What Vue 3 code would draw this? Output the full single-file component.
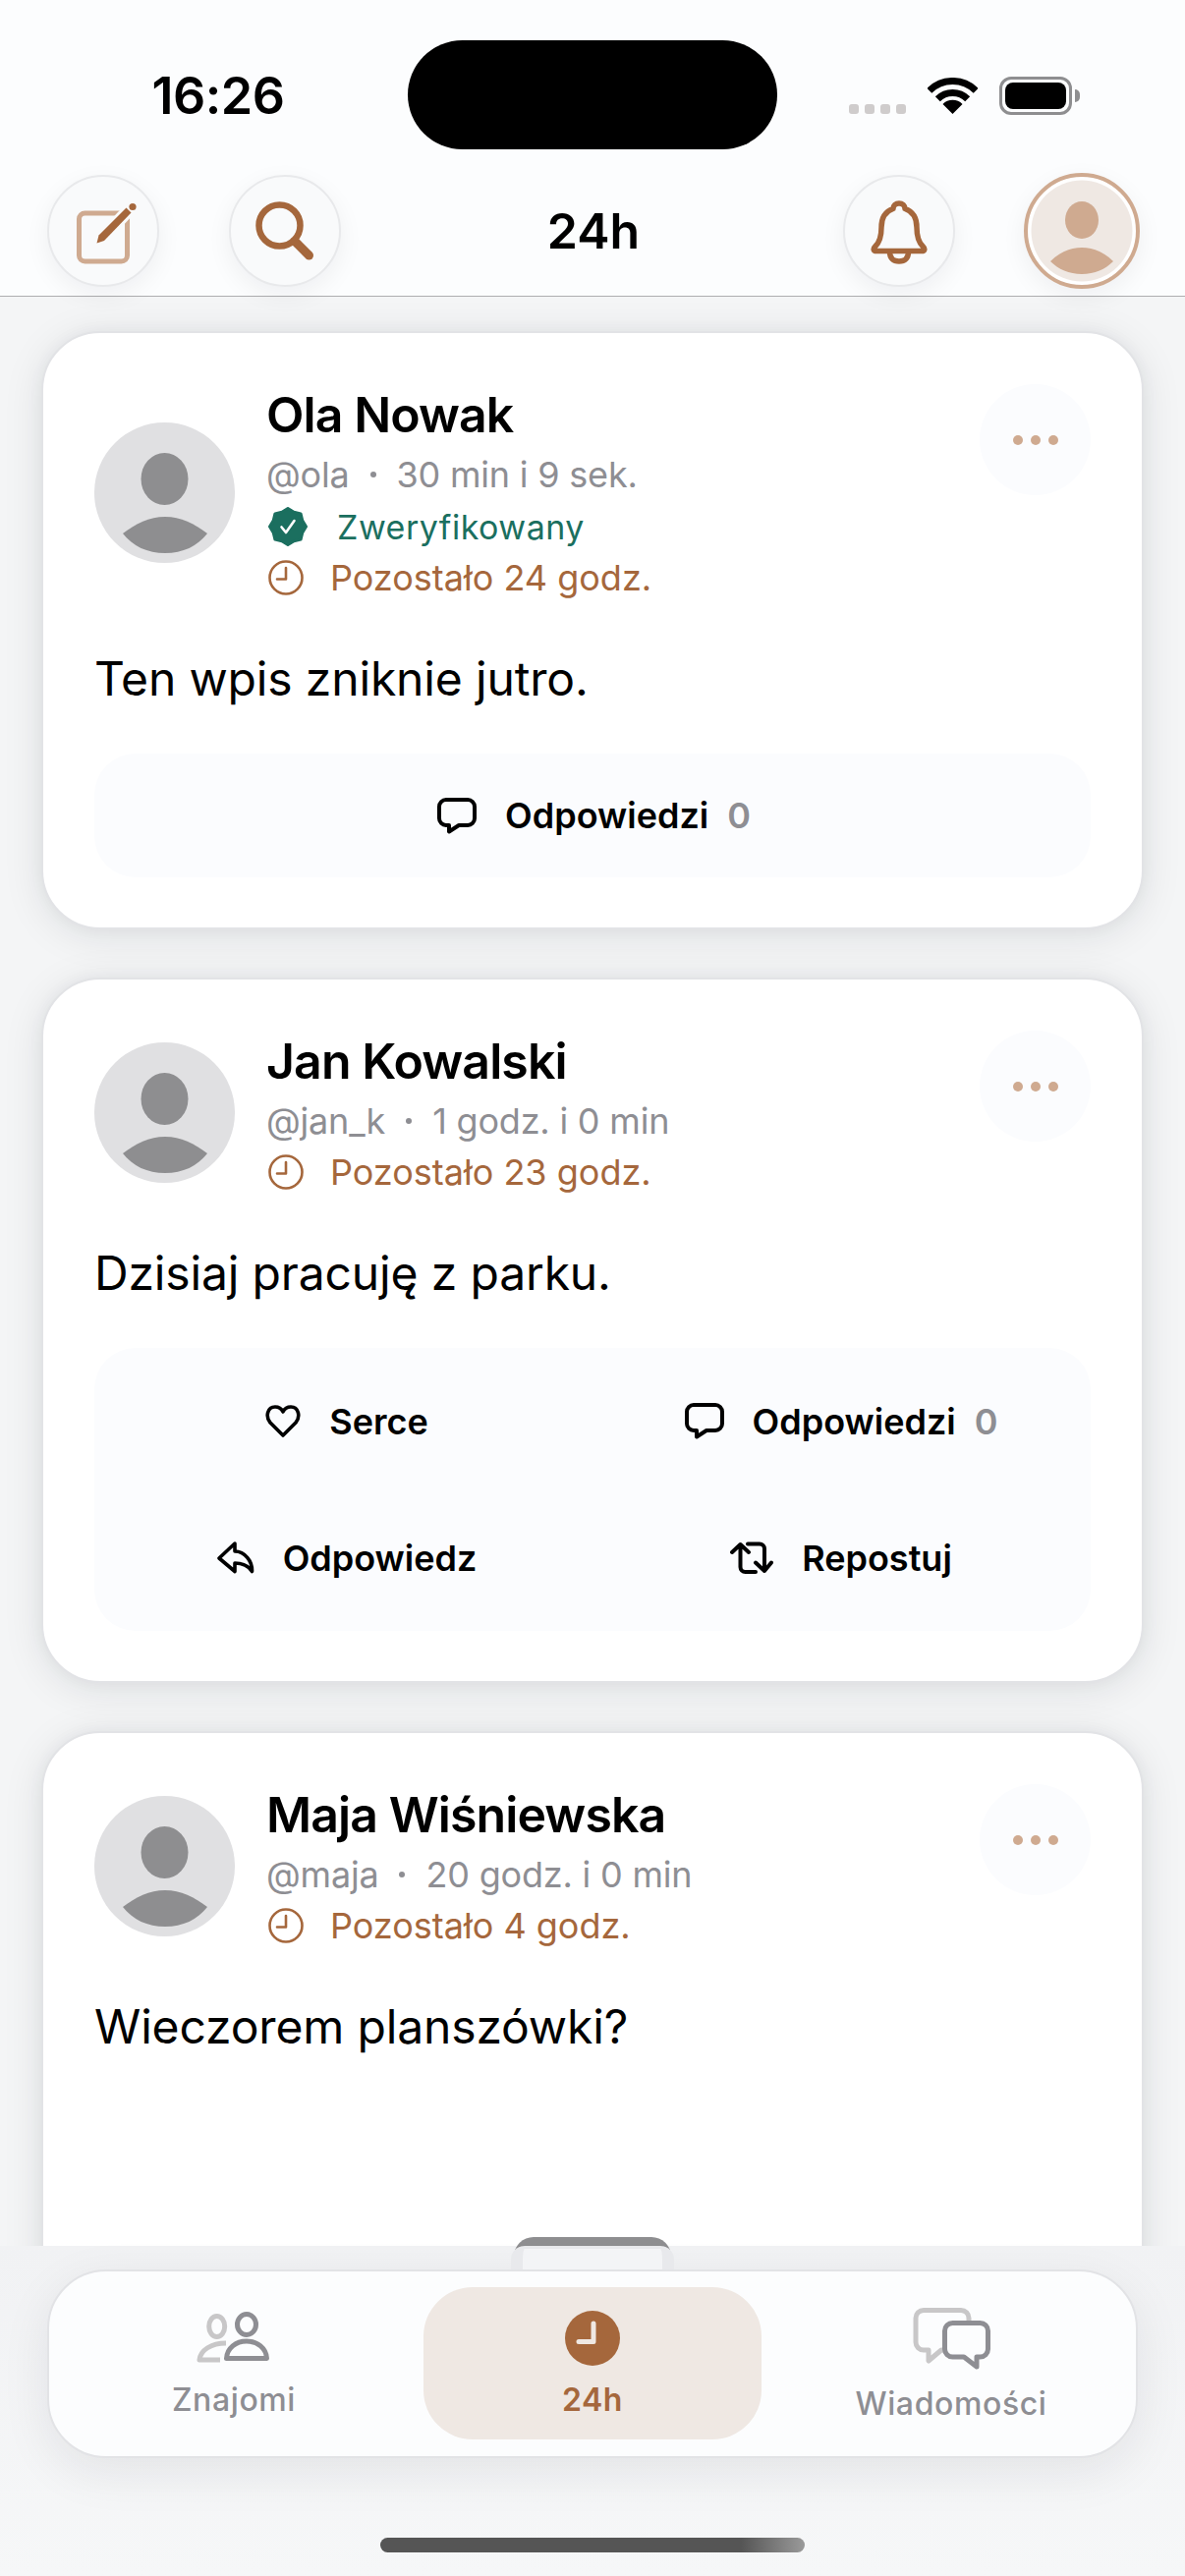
<script setup>
// 24h feed: posts that disappear after a day, with top bar and bottom tabs.
const posts = [
    {
        id: 1,
        name: "Ola Nowak",
        handle: "@ola",
        age: "30 min i 9 sek.",
        verified: true,
        remaining: "Pozostało 24 godz.",
        text: "Ten wpis zniknie jutro.",
        actions: "single",
    },
    {
        id: 2,
        name: "Jan Kowalski",
        handle: "@jan_k",
        age: "1 godz. i 0 min",
        verified: false,
        remaining: "Pozostało 23 godz.",
        text: "Dzisiaj pracuję z parku.",
        actions: "full",
    },
    {
        id: 3,
        name: "Maja Wiśniewska",
        handle: "@maja",
        age: "20 godz. i 0 min",
        verified: false,
        remaining: "Pozostało 4 godz.",
        text: "Wieczorem planszówki?",
        actions: "none",
    },
];

// Outline of the scalloped verified badge.
const badgePoints = Array.from({ length: 16 }, (_, i) => {
    const r = i % 2 ? 16 : 18.5;
    const a = (Math.PI * i) / 8 - Math.PI / 2;
    return `${(20 + r * Math.cos(a)).toFixed(2)},${(20 + r * Math.sin(a)).toFixed(2)}`;
}).join(" ");
</script>

<template>
    <div class="screen">
        <header class="top">
            <div class="status">
                <div class="status-left"><span class="time">16:26</span></div>
                <div class="island"></div>
                <div class="status-right">
                    <div class="signal"><i></i><i></i><i></i><i></i></div>
                    <svg class="wifi" width="51" height="37" viewBox="0 0 51 37" fill="none" stroke="#000" stroke-width="7">
                        <path d="M1.8 13.3a33.5 33.5 0 0 1 47.4 0" />
                        <path d="M10.3 21.8a21.5 21.5 0 0 1 30.4 0" />
                        <path d="M25.5 37 15.5 27a14 14 0 0 1 20 0Z" fill="#000" stroke="none" />
                    </svg>
                    <div class="battery"><div class="battery-fill"></div></div>
                </div>
            </div>
            <nav class="nav">
                <div class="nav-side">
                    <button class="round" type="button">
                        <svg width="80" height="80" viewBox="65 194.5 80 80" fill="none">
                            <rect x="80.5" y="216.5" width="49" height="49" rx="6" stroke="#cfaa90" stroke-width="5" />
                            <path d="M105 241 137 207" stroke="#f9fafb" stroke-width="13" />
                            <path d="M98.5 247 100.5 239 128.500 211 133.500 216 106 244.500Z" fill="#a5673c" />
                            <circle cx="135" cy="210" r="3.6" fill="#a5673c" />
                        </svg>
                    </button>
                    <button class="round" type="button">
                        <svg width="80" height="80" viewBox="251 194.5 80 80" fill="none" stroke="#a5673c">
                            <circle cx="285.5" cy="229" r="21" stroke-width="6.500" />
                            <path d="M301 245 315.500 259.500" stroke-width="9" stroke-linecap="round" />
                        </svg>
                    </button>
                </div>
                <h1 class="title">24h</h1>
                <div class="nav-side nav-side-right">
                    <button class="round" type="button">
                        <svg width="80" height="80" viewBox="875 194.5 80 80" fill="none" stroke="#a5673c" stroke-width="5.500" stroke-linejoin="round">
                            <path d="M915 206.5c-3.5 0-6 2.5-6 5.5-9 3-12 10-12 19 0 10-2 15-6 19-3 3-2 5 1 5h46c3 0 4-2 1-5-4-4-6-9-6-19 0-9-3-16-12-19 0-3-2.5-5.5-6-5.5Z" />
                            <path d="M905.5 256c0 6 3.500 9.500 9.500 9.500s9.500-3.500 9.500-9.500" />
                        </svg>
                    </button>
                    <div class="me">
                        <svg width="118" height="118" viewBox="0 0 118 118">
                            <circle cx="59" cy="59" r="57" fill="#fff" stroke="#cfaa90" stroke-width="4" />
                            <circle cx="59" cy="59" r="51.500" fill="#efe8e3" />
                            <ellipse cx="59" cy="48" rx="17" ry="19" fill="#cfaa90" />
                            <path d="M27 90C36 81 47 76 59 76 71 76 82 81 91 90 83 98 72 103 59 103 46 103 35 98 27 90Z" fill="#cfaa90" />
                        </svg>
                    </div>
                </div>
            </nav>
        </header>

        <main class="feed">
            <article
                v-for="post in posts"
                :key="post.id"
                class="card"
                :class="{ 'card-open': post.actions === 'none' }"
            >
                <div class="card-head">
                    <svg class="avatar" width="143" height="143" viewBox="0 0 143 143">
                        <circle cx="71.500" cy="71.500" r="71.500" fill="#e0e0e2" />
                        <ellipse cx="71.500" cy="57.500" rx="24" ry="26.500" fill="#8e8e90" />
                        <path d="M29 113C42 103 56 96 72 96 88 96 102 103 115 113 105 126 90 133 72 133 54 133 39 126 29 113Z" fill="#8e8e90" />
                    </svg>
                    <div class="who">
                        <div class="name">{{ post.name }}</div>
                        <div class="meta">
                            <span>{{ post.handle }}</span>
                            <i class="dot"></i>
                            <span>{{ post.age }}</span>
                        </div>
                        <div v-if="post.verified" class="line line-verified">
                            <svg width="40" height="40" viewBox="0 0 40 40">
                                <polygon :points="badgePoints" fill="#1b6f5f" stroke="#1b6f5f" stroke-width="3" stroke-linejoin="round" />
                                <path d="M13.500 20.500 18 26 26.500 14" fill="none" stroke="#fff" stroke-width="2.600" stroke-linecap="round" stroke-linejoin="round" />
                            </svg>
                            <span>Zweryfikowany</span>
                        </div>
                        <div class="line line-left">
                            <svg width="36" height="36" viewBox="0 0 36 36" fill="none" stroke="#a5673c" stroke-width="2.600">
                                <circle cx="18" cy="18" r="16.500" />
                                <path d="M18 8V19.500H9" stroke-linecap="round" stroke-linejoin="round" />
                            </svg>
                            <span>{{ post.remaining }}</span>
                        </div>
                    </div>
                    <button class="more" type="button">
                        <i></i><i></i><i></i>
                    </button>
                </div>

                <p class="body-text">{{ post.text }}</p>

                <div v-if="post.actions === 'single'" class="actions actions-single">
                    <div class="action">
                        <svg width="40" height="37" viewBox="0 0 40 37" fill="none" stroke="#000" stroke-width="4" stroke-linejoin="round">
                            <path d="M9 2H31a7 7 0 0 1 7 7V21a7 7 0 0 1-7 7H22L12 34.500V28H9a7 7 0 0 1-7-7V9a7 7 0 0 1 7-7Z" />
                        </svg>
                        <span>Odpowiedzi</span>
                        <b class="count">0</b>
                    </div>
                </div>

                <div v-else-if="post.actions === 'full'" class="actions actions-grid">
                    <div class="action">
                        <svg width="36" height="33" viewBox="0 0 36 33" fill="none" stroke="#000" stroke-width="3.600" stroke-linejoin="round">
                            <path d="M18 31 5 18C0 12 2 2 10 2 14 2 16.500 4 18 7 19.500 4 22 2 26 2 34 2 36 12 31 18Z" />
                        </svg>
                        <span>Serce</span>
                    </div>
                    <div class="action">
                        <svg width="40" height="37" viewBox="0 0 40 37" fill="none" stroke="#000" stroke-width="4" stroke-linejoin="round">
                            <path d="M9 2H31a7 7 0 0 1 7 7V21a7 7 0 0 1-7 7H22L12 34.500V28H9a7 7 0 0 1-7-7V9a7 7 0 0 1 7-7Z" />
                        </svg>
                        <span>Odpowiedzi</span>
                        <b class="count">0</b>
                    </div>
                    <div class="action">
                        <svg width="38" height="33" viewBox="0 0 38 33" fill="none" stroke="#000" stroke-width="3.600" stroke-linejoin="round">
                            <path d="M18 2 2 17 18 30.500V22C26 22 32 25 35.500 30.500 36 20 28 10 18 10Z" />
                        </svg>
                        <span>Odpowiedz</span>
                    </div>
                    <div class="action">
                        <svg width="44" height="33" viewBox="0 0 44 33" fill="none" stroke="#000" stroke-width="4" stroke-linecap="round" stroke-linejoin="round">
                            <path d="M2 11 10.500 3 19 11M10.500 3V26a5 5 0 0 0 5 5H26" />
                            <path d="M18 2.500H30a5 5 0 0 1 5 5V30M26 21.500 35 30 42 21.500" />
                        </svg>
                        <span>Repostuj</span>
                    </div>
                </div>
            </article>
        </main>

        <footer class="bottom">
            <div class="handle-dark"></div>
            <div class="handle-light"></div>
            <div class="tabs">
                <div class="tab">
                    <div class="tab-icon">
                        <svg width="80" height="56" viewBox="0 0 80 56" fill="none" stroke-width="5" stroke-linejoin="round">
                            <ellipse cx="22.700" cy="18" rx="8" ry="10.500" stroke="#c8c7c8" />
                            <path d="M32 35C17 35 6 42 5 52H26" stroke="#c8c7c8" />
                            <ellipse cx="53" cy="16" rx="9.500" ry="10.500" stroke="#8e8e93" />
                            <path d="M32.500 50.500C33 40 42 33 53 33 64 33 73 40 73.500 50.500Z" stroke="#8e8e93" />
                        </svg>
                    </div>
                    <span class="tab-label">Znajomi</span>
                </div>
                <div class="tab tab-active">
                    <div class="tab-icon tab-icon-low">
                        <svg width="56" height="56" viewBox="0 0 56 56" fill="none">
                            <circle cx="28" cy="28" r="28" fill="#a5673c" />
                            <path d="M29 13V31.500H14" stroke="#efe8e3" stroke-width="5" stroke-linecap="round" stroke-linejoin="round" />
                        </svg>
                    </div>
                    <span class="tab-label">24h</span>
                </div>
                <div class="tab tab-msg">
                    <div class="tab-icon tab-icon-low">
                        <svg width="85" height="68" viewBox="0 0 85 68" fill="none" stroke-width="5" stroke-linejoin="round">
                            <path d="M14 5.500H52a8 8 0 0 1 8 8V38a8 8 0 0 1-8 8H32L19 57V46H14a8 8 0 0 1-8-8V13.500a8 8 0 0 1 8-8Z" stroke="#c8c7c8" />
                            <path d="M43.500 18.500H71.500a8 8 0 0 1 8 8V45a8 8 0 0 1-8 8H68V63L55 53H43.500a8 8 0 0 1-8-8V26.500a8 8 0 0 1 8-8Z" fill="#fcfdfe" stroke="#8e8e93" />
                        </svg>
                    </div>
                    <span class="tab-label">Wiadomości</span>
                </div>
            </div>
            <div class="home-bar"></div>
        </footer>
    </div>
</template>

<style scoped>
.screen {
    width: 1206px;
    height: 2622px;
    display: flex;
    flex-direction: column;
    overflow: hidden;
    background: #f4f5f6;
    font-family: Inter, "Noto Sans", sans-serif;
    color: #000;
}

.top {
    position: relative;
    z-index: 3;
    background: #fcfdfe;
    border-bottom: 1px solid #aeaeb0;
    padding-top: 41px;
    height: 302px;
    box-sizing: border-box;
}

.status {
    display: flex;
    height: 111px;
}

.status-left {
    width: 415px;
    display: flex;
    justify-content: center;
    align-items: center;
    padding-left: 29px;
    padding-top: 2px;
    box-sizing: border-box;
}

.time {
    font-size: 52px;
    font-weight: 600;
    letter-spacing: -0.5px;
}

.island {
    width: 376px;
    height: 111px;
    border-radius: 56px;
    background: #000;
}

.status-right {
    display: flex;
    align-items: flex-end;
    gap: 22px;
    margin-top: 37px;
    height: 39px;
    padding-left: 73px;
}

.signal {
    display: flex;
    gap: 6px;
    margin-bottom: 1px;
}

.signal i {
    width: 10px;
    height: 10px;
    border-radius: 3px;
    background: #cfcccc;
}

.wifi {
    margin-bottom: 1px;
}

.battery {
    position: relative;
    width: 74px;
    height: 39px;
    box-sizing: border-box;
    border: 3px solid #8e8e90;
    border-radius: 12px;
    padding: 3px;
}

.battery::after {
    content: "";
    position: absolute;
    right: -11px;
    top: 10px;
    width: 5px;
    height: 13px;
    border-radius: 0 6px 6px 0;
    background: #8e8e90;
}

.battery-fill {
    height: 100%;
    border-radius: 8px;
    background: #000;
}

.nav {
    display: grid;
    grid-template-columns: 1fr auto 1fr;
    align-items: center;
    padding: 24px 46px 0 48px;
}

.nav-side {
    display: flex;
    align-items: center;
    gap: 71px;
}

.nav-side-right {
    justify-content: flex-end;
    gap: 70px;
}

.title {
    margin: 0;
    font-size: 50px;
    font-weight: 600;
    line-height: 60px;
}

.round {
    width: 114px;
    height: 114px;
    padding: 0;
    box-sizing: border-box;
    border: 2px solid #e8e9eb;
    border-radius: 50%;
    background: #f9fafb;
    box-shadow: 0 8px 26px rgba(20, 25, 40, 0.06);
    display: flex;
    align-items: center;
    justify-content: center;
}

.me {
    width: 118px;
    height: 118px;
    border-radius: 50%;
    box-shadow: 0 8px 26px rgba(20, 25, 40, 0.06);
}

.me svg {
    display: block;
}

.feed {
    flex: 1;
    min-height: 0;
    overflow: hidden;
    padding: 35px 42px 0;
    display: flex;
    flex-direction: column;
    gap: 49px;
}

.card {
    flex: none;
    box-sizing: border-box;
    background: #fff;
    border: 2px solid #e2e3e6;
    border-radius: 60px;
    padding: 52px 52px 51px;
    box-shadow: 0 6px 40px rgba(20, 25, 40, 0.1), 0 0 16px rgba(20, 25, 40, 0.04);
}

.card-open {
    min-height: 700px;
}

.card-head {
    display: flex;
    align-items: center;
}

.avatar {
    flex: none;
    margin-top: -6px;
}

.who {
    flex: 1;
    margin-left: 32px;
    padding: 1px 0 8px;
}

.name {
    font-size: 50px;
    font-weight: 600;
    line-height: 60px;
    letter-spacing: -0.9px;
}

.meta {
    display: flex;
    align-items: center;
    gap: 21px;
    margin: 1px 0 1px;
    font-size: 36px;
    line-height: 60px;
    letter-spacing: -0.2px;
    color: #8e8e93;
}

.dot {
    width: 6px;
    height: 6px;
    border-radius: 50%;
    background: #8e8e93;
}

.line {
    display: flex;
    align-items: center;
    gap: 27px;
    height: 42px;
    font-size: 36px;
    padding-left: 2px;
}

.line-verified {
    height: 44px;
    margin-bottom: 9px;
    gap: 30px;
    font-size: 34px;
    letter-spacing: 0.5px;
    color: #1b6f5f;
}

.line-left {
    color: #a5673c;
}

.more {
    align-self: flex-start;
    flex: none;
    width: 113px;
    height: 113px;
    padding: 0;
    border: 0;
    border-radius: 50%;
    background: #fbfcfe;
    display: flex;
    align-items: center;
    justify-content: center;
    gap: 8px;
}

.more i {
    width: 10px;
    height: 10px;
    border-radius: 50%;
    background: #cfaa90;
}

.body-text {
    margin: 44px 0 46px;
    font-size: 48px;
    line-height: 60px;
    letter-spacing: -0.15px;
}

.actions {
    border-radius: 42px;
    background: #fbfcfe;
}

.actions-single {
    height: 126px;
    display: flex;
    justify-content: center;
}

.actions-grid {
    display: grid;
    grid-template-columns: 1fr 1fr;
    grid-auto-rows: 125px;
    gap: 14px 12px;
    padding: 12px 10px;
}

.action {
    display: flex;
    align-items: center;
    justify-content: center;
    gap: 29px;
    padding-left: 3px;
    font-size: 36px;
    font-weight: 600;
}

.count {
    margin-left: -10px;
    font-weight: 600;
    color: #8e8e93;
}

.bottom {
    position: relative;
    z-index: 2;
    height: 336px;
    flex: none;
    background: linear-gradient(#f1f2f4, #f6f7f8);
    padding-top: 24px;
    box-sizing: border-box;
}

.handle-dark {
    position: absolute;
    z-index: -1;
    left: 523px;
    top: -9px;
    width: 160px;
    height: 20px;
    border-radius: 20px 20px 0 0;
    background: #8e8e90;
}

.handle-light {
    position: absolute;
    left: 520px;
    top: 0;
    width: 166px;
    height: 24px;
    box-sizing: border-box;
    border: solid #e8e9ec;
    border-width: 3px 12px 0;
    border-radius: 14px 14px 0 0;
    background: #f3f4f6;
}

.tabs {
    margin: 0 48px;
    height: 192px;
    box-sizing: border-box;
    padding: 16px;
    display: grid;
    grid-template-columns: repeat(3, 344px);
    gap: 21px;
    background: #fcfdfe;
    border: 2px solid #e2e3e6;
    border-radius: 60px;
    box-shadow: 0 14px 50px rgba(20, 25, 40, 0.08);
}

.tab {
    height: 155px;
    border-radius: 50px;
    display: flex;
    flex-direction: column;
    align-items: center;
    color: #8e8e93;
}

.tab-active {
    background: #efe8e3;
    color: #a5673c;
}

.tab-icon {
    height: 95px;
    padding-top: 5px;
    box-sizing: border-box;
    display: flex;
    align-items: center;
}

.tab-icon-low {
    padding-top: 9px;
}

.tab-label {
    font-size: 32px;
    font-weight: 500;
    line-height: 40px;
    letter-spacing: 0.6px;
}

.tab-active .tab-label {
    font-weight: 600;
}

.tab-msg .tab-label {
    margin-top: 4px;
}

.home-bar {
    width: 432px;
    height: 15px;
    margin: 81px auto 0;
    border-radius: 8px;
    background: linear-gradient(90deg, #555 0, #555 85%, #9a9a9a 100%);
}
</style>

<style>
body {
    background: #f4f5f6;
}
</style>
